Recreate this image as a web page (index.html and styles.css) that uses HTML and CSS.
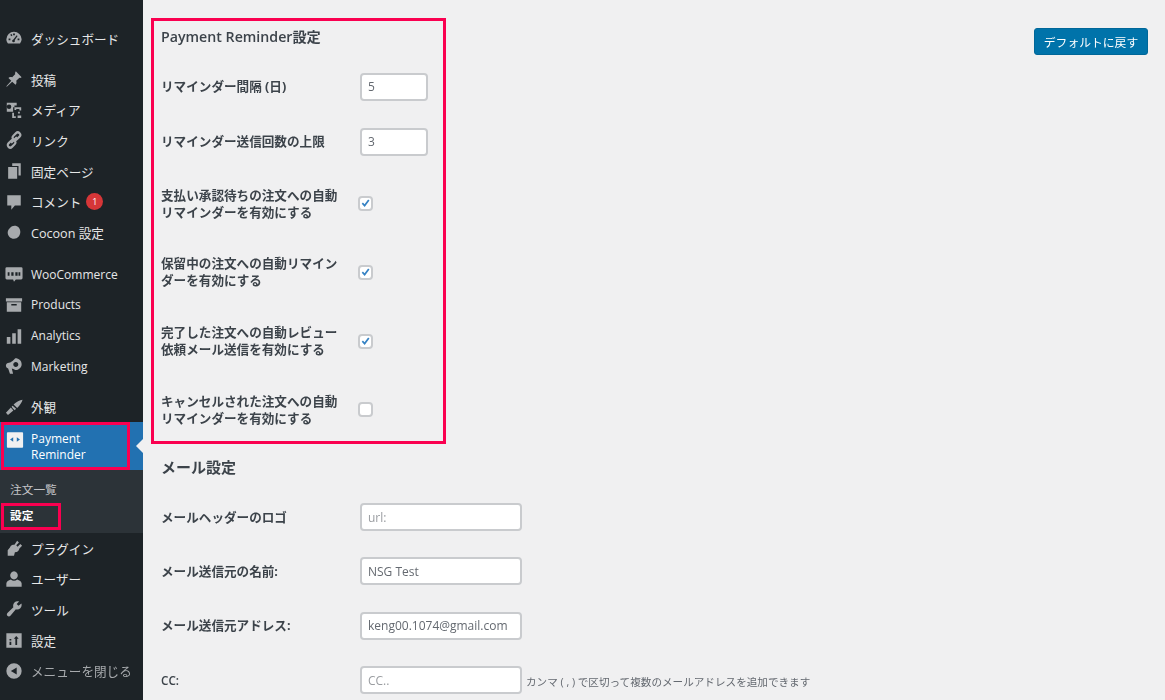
FILE: index.html
```html
<!DOCTYPE html>
<html lang="ja">
<head>
<meta charset="utf-8">
<title>Payment Reminder設定</title>
<link rel="stylesheet" href="styles.css">
</head>
<body>
<div class="page">
  <nav class="menu">
    <a class="item first"><svg class="ico" viewBox="0 0 20 20"><path d="M10 3a8.500 8.500 0 0 0-8.500 8.500c0 2 .7 3.500 1.800 4.500h13.400a7 7 0 0 0 1.800-4.500A8.500 8.500 0 0 0 10 3zM9 5h2v2H9zM4 10.500h2v2H4zm10 0h2v2h-2zM5.800 6.500l1.400-1L8.300 7 7 8zm5.200 6.800a1.500 1.500 0 0 1-3 0c0-.8.600-1.400 1.300-1.500L13 7l1 .8-3.300 4.700c.2.200.3.500.3.800z" fill-rule="evenodd"/></svg><span>ダッシュボード</span></a>
    <a class="item sep"><svg class="ico" viewBox="0 0 20 20"><path d="M12 1.500l6.500 6.500-1.500 1-1-.5L12.500 12c.6 2 .2 3.400-.8 4.300L8 13l-6 5.500-.5-.5L7 12 3.800 8.800C4.700 7.800 6 7.400 8 8l3.500-3.500-.5-1z"/></svg><span>投稿</span></a>
    <a class="item"><svg class="ico" viewBox="0 0 20 20"><path fill-rule="evenodd" d="M2 2h11v3h-2.500v2H9v5H2zm2.500 2A2.500 2.500 0 1 0 7 6.500 2.500 2.500 0 0 0 4.500 4zM10.500 7H18v3.500h-2V9h-3.500v1h-2zm-2.500 6h2v4h2v2H8zm6.500-1h2v2h-2zm-.5 4h4v3h-4z"/></svg><span>メディア</span></a>
    <a class="item"><svg class="ico link" viewBox="0 0 20 20"><rect x="10" y="1" width="5.500" height="9.500" rx="2.700" transform="rotate(45 12.750 5.750)"/><rect x="4.500" y="9.500" width="5.500" height="9.500" rx="2.700" transform="rotate(45 7.250 14.250)"/><path d="M7.500 12.500l5-5"/></svg><span>リンク</span></a>
    <a class="item"><svg class="ico" viewBox="0 0 20 20"><path d="M8 1.500h9.500v13.500H15V4.500H8zM3.500 5.500H13.500v13h-10z"/></svg><span>固定ページ</span></a>
    <a class="item"><svg class="ico" viewBox="0 0 20 20"><path d="M2.500 2.500h15v11.500h-6.500l-4 4.500v-4.500H2.500z"/></svg><span>コメント</span><b class="badge">1</b></a>
    <a class="item"><svg class="ico" viewBox="0 0 20 20"><path d="M10.500 3c4 0 6.500 3 6.500 7s-3 7.500-7 7.500-7-3-7-7c0-2 1-3.500 2.500-5s3-2.500 5-2.500z"/></svg><span>Cocoon 設定</span></a>
    <a class="item sep woo"><svg class="ico" viewBox="0 0 20 20"><path fill-rule="evenodd" d="M2 2.500h16a1.500 1.500 0 0 1 1.500 1.500v10.500A1.500 1.500 0 0 1 18 16h-6l-2 2.500L9 16H2A1.500 1.500 0 0 1 .5 14.500V4A1.500 1.500 0 0 1 2 2.500zm1 5.500v4h2V8zm4 0v4h2.500V8zm4.500 0v4H14V8zm3.500 0v4h2V8z"/></svg><span class="latin">WooCommerce</span></a>
    <a class="item"><svg class="ico" viewBox="0 0 20 20"><path fill-rule="evenodd" d="M1 2.500h18v3.500H1zM2 7h16v10.500H2zm5 2v1.500h6V9z"/></svg><span class="latin">Products</span></a>
    <a class="item"><svg class="ico" viewBox="0 0 20 20"><path d="M2 11h4v7.500H2zM8 7h4v11.500H8zM14 2.500h4v16h-4z"/></svg><span class="latin">Analytics</span></a>
    <a class="item"><svg class="ico" viewBox="0 0 20 20"><path fill-rule="evenodd" d="M11.500 1.500c4 0 7 3 7 6.500s-3 6.500-7 6.500c-1.500-1-3-1.500-4-1.800L9 18.500H5.500l-2-5.700C2 12.500 1 11 1 9.500 1 7.800 2.500 6.500 4.500 6.500 7 6.300 10 3 11.500 1.500zm.5 4c-1.500 0-2.800 1.200-2.800 2.800s1.300 2.700 2.800 2.700 2.800-1.200 2.800-2.700-1.300-2.800-2.800-2.800z"/></svg><span class="latin">Marketing</span></a>
    <a class="item sep"><svg class="ico" viewBox="0 0 20 20"><path d="M19.500 2c-.6 2.500-3 6.500-6 9l-4-3.700C12.500 4.500 16.500 2.500 19.500 2zM8.500 8.500l3.800 3.500-1.500 1.500C9 12.500 8 11 7.400 9.500zM6.500 10.500l2.800 3.300-6 5-2.300-2.300z"/></svg><span>外観</span></a>
    <div class="current">
      <a class="current-link"><svg class="ico white" viewBox="0 0 20 20"><path fill-rule="evenodd" d="M2 1.500h16a1 1 0 0 1 1 1v15a1 1 0 0 1-1 1H2a1 1 0 0 1-1-1v-15a1 1 0 0 1 1-1zM8 7L4.500 9.500 8 12zm4 0v5l3.500-2.500z"/></svg><span class="latin">Payment<br>Reminder</span></a>
    </div>
    <div class="sub">
      <a class="sub-item">注文一覧</a>
      <a class="sub-item active">設定</a>
    </div>
    <a class="item"><svg class="ico" viewBox="0 0 20 20"><path d="M13.500 2l2 2-3 3 1.500 1.500 3-3 2 2-3 3c-.5 2-1.500 3.500-3 4l-2 .3-1 3.700H3v-6l2-2.500.5-.5C6.500 7 8 6.500 10.500 6.500z"/></svg><span>プラグイン</span></a>
    <a class="item"><svg class="ico" viewBox="0 0 20 20"><path d="M10 1.500a4.500 4.500 0 0 1 4.200 5c0 2-2 4-4.200 4s-4.200-2-4.200-4a4.500 4.500 0 0 1 4.200-5zM6.500 10.500c2 1.800 5 1.800 7 0 2.500.7 5 2.500 5 4.500v3.500h-17V15c0-2 2.500-3.800 5-4.500z"/></svg><span>ユーザー</span></a>
    <a class="item"><svg class="ico" viewBox="0 0 20 20"><path d="M18.500 5.500c0 2.800-2.200 5-5 5-.5 0-1-.1-1.400-.3L6 17.500c-.8.900-2.400 1-3.300.1s-.8-2.300 0-3.200L9.300 8c-.2-.5-.3-1-.3-1.500C9 3.700 11.300 1.500 14 1.500c.6 0 1.100.1 1.600.3L13 4.500l2 2 3.200-2.600c.2.500.3 1 .3 1.600z"/></svg><span>ツール</span></a>
    <a class="item"><svg class="ico" viewBox="0 0 20 20"><path fill-rule="evenodd" d="M1.500 2.500h17v16h-17zM5 12v3.500h2V12zm0-3v1.500h2V9zM12.500 5.500l-2.700 3h1.700v7h2v-7h1.700z"/></svg><span>設定</span></a>
    <a class="item collapse"><svg class="ico" viewBox="0 0 20 20"><path fill-rule="evenodd" d="M10 1.500a8.500 8.500 0 1 1 0 17 8.500 8.500 0 0 1 0-17zM13 6l-6.500 4 6.500 4z"/></svg><span>メニューを閉じる</span></a>
  </nav>

  <main class="content">
    <div class="settings">
      <section class="box">
        <h2 class="title">Payment Reminder設定</h2>
        <div class="row">
          <label class="label">リマインダー間隔 (日)</label>
          <input class="field short" type="text" value="5">
        </div>
        <div class="row">
          <label class="label">リマインダー送信回数の上限</label>
          <input class="field short" type="text" value="3">
        </div>
        <div class="row tall">
          <label class="label">支払い承認待ちの注文への自動リマインダーを有効にする</label>
          <span class="check on"><svg viewBox="0 0 16 16"><path d="M2.500 8.500l1.800-1.800 2.300 2.400L11.800 2l2 1.500-7 9.500z"/></svg></span>
        </div>
        <div class="row tall">
          <label class="label">保留中の注文への自動リマインダーを有効にする</label>
          <span class="check on"><svg viewBox="0 0 16 16"><path d="M2.500 8.500l1.800-1.800 2.300 2.400L11.800 2l2 1.500-7 9.500z"/></svg></span>
        </div>
        <div class="row tall">
          <label class="label">完了した注文への自動レビュー依頼メール送信を有効にする</label>
          <span class="check on"><svg viewBox="0 0 16 16"><path d="M2.500 8.500l1.800-1.800 2.300 2.400L11.800 2l2 1.500-7 9.500z"/></svg></span>
        </div>
        <div class="row tall last">
          <label class="label">キャンセルされた注文への自動リマインダーを有効にする</label>
          <span class="check"></span>
        </div>
      </section>
      <section class="mail">
        <h2 class="title mail-title">メール設定</h2>
        <div class="row">
          <label class="label">メールヘッダーのロゴ</label>
          <input class="field long" type="text" placeholder="url:">
        </div>
        <div class="row">
          <label class="label">メール送信元の名前:</label>
          <input class="field long" type="text" value="NSG Test">
        </div>
        <div class="row">
          <label class="label">メール送信元アドレス:</label>
          <input class="field long" type="text" value="keng00.1074@gmail.com">
        </div>
        <div class="row">
          <label class="label cc">CC:</label>
          <div class="with-hint">
            <input class="field long" type="text" placeholder="CC..">
            <span class="hint">カンマ ( , ) で区切って複数のメールアドレスを追加できます</span>
          </div>
        </div>
      </section>
    </div>
    <button class="reset" type="button">デフォルトに戻す</button>
  </main>
</div>
</body>
</html>
```
FILE: styles.css
```css
* { box-sizing: border-box; }
html, body { margin: 0; height: 700px; overflow: hidden; background: #f0f0f1; }
body { font-family: "Open Sans", "Noto Sans CJK JP", sans-serif; font-size: 12.6px; color: #3c434a; }
.page { display: flex; height: 700px; filter: blur(0.6px); }

.menu { flex: 0 0 143px; width: 143px; background: #1d2327; padding-top: 23px; color: #e6e7e8; }
.item { display: flex; align-items: center; height: 30.7px; padding-left: 5px; gap: 8px; }
.item.sep { margin-top: 10px; }
.item.woo { margin-top: 11px; }
.ico { width: 18px; height: 18px; flex: none; fill: #a7aaad; }
.ico.white { fill: #f0f0f1; }
.ico.link { fill: none; stroke: #a7aaad; stroke-width: 2.400; stroke-linecap: round; }
.latin { font-size: 12px; }
.badge { width: 17px; height: 17px; border-radius: 50%; background: #d63638; color: #fff; font-size: 9px; font-weight: 400; line-height: 17px; text-align: center; margin-left: -3px; }
.collapse { color: #a7aaad; }

.current { position: relative; height: 48px; background: #2271b1; color: #fff; }
.current::after { content: ""; position: absolute; right: 0; top: 17px; border: 7px solid transparent; border-left-width: 0; border-right-color: #f0f0f1; }
.current-link { display: flex; align-items: center; gap: 7px; width: 129px; height: 48px; padding: 2px 0 0 2px; border: 3px solid #fa0050; margin-left: 1px; line-height: 16px; }
.current-link .ico { margin-top: -14px; }

.sub { height: 62.500px; background: #2c3338; padding-top: 8.500px; color: #c3c4c7; }
.sub-item { display: block; height: 24px; line-height: 21px; padding-left: 10px; font-size: 11.7px; }
.sub-item.active { width: 60px; height: 27px; margin: 0 0 0 1px; padding: 0 0 3px 6px; border: 3px solid #fa0050; color: #fff; font-weight: 700; line-height: 19px; }

.content { flex: 1; display: flex; justify-content: space-between; align-items: flex-start; padding: 18px 17px 0 8px; min-width: 0; }
.settings { width: 400px; flex: none; }
.box { width: 295px; border: 3px solid #fa0050; padding: 8px 0 0 7px; }
.title { margin: 0 0 14px; font-size: 14.2px; font-weight: 600; line-height: 16px; color: #3c434a; }
.mail { padding: 14.500px 0 0 10px; }
.mail-title { margin-bottom: 15px; font-size: 15px; }

.row { display: flex; align-items: center; padding: 13.500px 0; }
.mail .row { padding: 13.200px 0; }
.row.tall { padding: 17.500px 0 17.300px; }
.row.last { padding-bottom: 14.500px; }
.label { flex: 0 0 199px; width: 199px; padding-right: 20px; font-size: 12.6px; font-weight: 700; line-height: 17px; }
.label.cc { font-weight: 600; font-size: 11.7px; }

.field { height: 28px; padding: 0 6px; border: 2px solid #c9cbce; border-radius: 4px; background: #fff; font: 12px "Open Sans", "Noto Sans CJK JP", sans-serif; color: #646970; outline: none; }
.field::placeholder { color: #9a9da1; opacity: 1; }
.short { width: 68px; }
.long { width: 162px; }

.check { display: block; width: 15px; height: 15px; margin-left: -2px; border: 2px solid #c9cbce; border-radius: 4px; background: #fff; }
.check svg { display: block; width: 11px; height: 11px; fill: #3582c4; }

.with-hint { display: flex; align-items: center; gap: 4px; white-space: nowrap; }
.hint { font-size: 10.6px; color: #646970; padding-top: 3px; }

.reset { flex: none; margin-top: 10px; width: 114px; height: 27px; padding: 0; border: 1px solid #006799; border-radius: 3px; background: #0073aa; color: #fff; font: 11.8px "Open Sans", "Noto Sans CJK JP", sans-serif; }
```
